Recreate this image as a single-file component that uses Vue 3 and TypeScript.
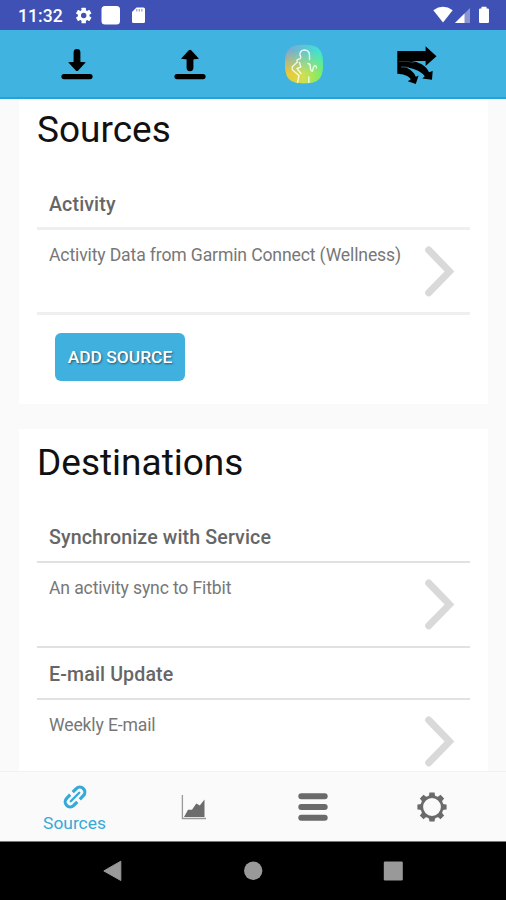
<script setup lang="ts">
interface Row {
  heading: string
  detail: string
}

const sources: Row[] = [
  { heading: 'Activity', detail: 'Activity Data from Garmin Connect (Wellness)' },
]
const destinations: Row[] = [
  { heading: 'Synchronize with Service', detail: 'An activity sync to Fitbit' },
  { heading: 'E-mail Update', detail: 'Weekly E-mail' },
]
const teeth: number[] = [0, 45, 90, 135, 180, 225, 270, 315]
</script>

<template>
  <div class="screen">
    <header class="status">
      <span class="clock">11:32</span>
      <svg class="status-left" width="75" height="30" viewBox="0 0 75 30">
        <g transform="translate(8.7 15.5)" fill="#fff">
          <rect v-for="a in [0, 60, 120]" :key="a" x="-2.2" y="-7.8" width="4.4" height="15.6" rx=".6" :transform="`rotate(${a})`" />
          <circle r="5.8" />
          <circle r="2.7" fill="#3f51b5" />
        </g>
        <rect x="26.5" y="6" width="18.5" height="18.5" rx="3.5" fill="#fff" />
        <path d="M61.5 7.5H68.5Q70 7.5 70 9V21.5Q70 23 68.5 23H58.5Q57 23 57 21.5V12Z" fill="#fff" />
        <path d="M61.8 9v2.6M64.3 9v2.6M66.8 9v2.6" stroke="#9aa4d8" stroke-width="1.3" />
      </svg>
      <svg class="status-right" width="60" height="30" viewBox="0 0 60 30">
        <path d="M.3 10.3Q10 3.4 19.7 10.3L10 22.5Z" fill="#fff" />
        <path d="M37 8V23H22Z" fill="#8994d1" />
        <path d="M31.5 13.4V23H22Z" fill="#fff" />
        <path d="M48.5 7.5V6.8H53.5V8.5H54.8Q56 8.5 56 9.7V21.8Q56 23 54.8 23H47.2Q46 23 46 21.8V9.7Q46 8.5 47.2 8.5H48.5Z" fill="#fff" />
      </svg>
    </header>

    <nav class="toolbar">
      <svg width="40" height="40" viewBox="0 0 40 40">
        <path d="M20 8.4V18" stroke="#000" stroke-width="6.8" stroke-linecap="round" />
        <path d="M11.2 18.3Q20 17.4 28.8 18.3L21.2 26.6Q20 27.6 18.8 26.6Z" />
        <path d="M7 32.6H33" stroke="#000" stroke-width="5.2" stroke-linecap="round" />
      </svg>
      <svg width="40" height="40" viewBox="0 0 40 40">
        <path d="M20 14V23.8" stroke="#000" stroke-width="6.8" stroke-linecap="round" />
        <path d="M11 14.8L18.8 6.3Q20 5.2 21.2 6.3L29 14.8Q20 16 11 14.8Z" />
        <path d="M7 32.6H33" stroke="#000" stroke-width="5.2" stroke-linecap="round" />
      </svg>
      <svg width="40" height="40" viewBox="0 0 40 40">
        <defs>
          <linearGradient id="tile" x1="0" y1="0" x2="1" y2=".15">
            <stop offset="0" stop-color="#83a3d2" />
            <stop offset=".5" stop-color="#60c5d2" />
            <stop offset="1" stop-color="#3be8d5" />
          </linearGradient>
          <linearGradient id="warm" x1="0" y1="0" x2="1" y2="0">
            <stop offset="0" stop-color="#f2c52c" />
            <stop offset=".5" stop-color="#cde052" />
            <stop offset="1" stop-color="#75ed66" />
          </linearGradient>
          <linearGradient id="fade" x1="0" y1="0" x2="0" y2="1">
            <stop offset=".15" stop-color="#000" />
            <stop offset=".75" stop-color="#fff" />
          </linearGradient>
          <mask id="lower"><rect width="40" height="40" fill="url(#fade)" /></mask>
        </defs>
        <path d="M20 .8C34 .8 39 5 39 20S34 39.3 20 39.3S1 35 1 20S6 .8 20 .8Z" fill="url(#tile)" />
        <path d="M20 .8C34 .8 39 5 39 20S34 39.3 20 39.3S1 35 1 20S6 .8 20 .8Z" fill="url(#warm)" mask="url(#lower)" />
        <g fill="none" stroke="#fff" stroke-opacity=".82" stroke-width="1.4" stroke-linecap="round" stroke-linejoin="round">
          <path d="M16 11.5Q15.5 6.2 20.5 6Q25.5 6.2 25.5 11.5V15.5" />
          <path d="M16.5 12Q17.5 15 14.5 15.2Q12 15.8 13.5 18L8.5 22.5Q7.5 24 8.5 26L15 31.5L13.5 38.5" />
          <path d="M15.5 18.5L16.8 23L13 24.5L17 29.5" />
          <path d="M24.8 33V38.5" />
          <path d="M24 19.5Q26.5 20 26.3 23Q26.5 27.5 28.5 27.2Q29.3 22 31 21.5Q32.7 22 32.5 24" />
        </g>
      </svg>
      <svg width="40" height="40" viewBox="0 0 40 40">
        <path d="M.3 7H28.6V2.3L39.5 12.2L28.6 22V16.9H.3Z" />
        <path d="M.3 16.5H12C23 18 29.5 22 32 28.3L35.7 26.9L35 35.8L25.3 34.6L27.8 32.2C23 26.5 16 24.2 8.3 23.6C13 24.8 17 28.5 18.8 32.8L21.6 31.6L18.8 40L10.8 37.3L13.8 35.2C11 31.5 6 30 .3 29.8Z" />
        <path d="M2 17.6Q11 16.7 17 18.8" fill="none" stroke="#18455a" stroke-width=".8" />
        <path d="M4 23Q8 22.8 12 23.6" fill="none" stroke="#2b7895" stroke-width=".8" />
      </svg>
    </nav>

    <main class="content">
      <section class="card">
        <h1>Sources</h1>
        <div v-for="row in sources" :key="row.heading" class="group thick">
          <h2>{{ row.heading }}</h2>
          <div class="item">
            <span class="detail">{{ row.detail }}</span>
            <svg class="chevron" width="34" height="54" viewBox="0 0 34 54"><path d="M6.7 5L27.5 26.5L6.7 47.8" /></svg>
          </div>
        </div>
        <button class="add">ADD SOURCE</button>
      </section>
      <section class="card second">
        <h1>Destinations</h1>
        <div v-for="row in destinations" :key="row.heading" class="group">
          <h2>{{ row.heading }}</h2>
          <div class="item">
            <span class="detail">{{ row.detail }}</span>
            <svg class="chevron" width="34" height="54" viewBox="0 0 34 54"><path d="M6.7 5L27.5 26.5L6.7 47.8" /></svg>
          </div>
        </div>
      </section>
    </main>

    <nav class="tabs">
      <div class="tab active">
        <svg width="24" height="24" viewBox="0 0 24 24">
          <g transform="rotate(-45 12 12)" fill="none" stroke="#35a9d8" stroke-width="3.2">
            <path d="M10.2 7H5.2A5 5 0 0 0 5.2 17H10.2M13.8 7H18.8A5 5 0 0 1 18.8 17H13.8" />
            <path d="M6 12H18" stroke-linecap="round" stroke-width="2.4" />
          </g>
        </svg>
        <span>Sources</span>
      </div>
      <div class="tab">
        <svg width="26" height="26" viewBox="0 0 26 26">
          <path d="M1.4 1V24.5H25" fill="none" stroke="#999" stroke-width="1.3" />
          <path d="M3 23L7 15.8H11L15.3 9.5L18.8 11.5L23.5 5.5V23Z" fill="#6c6c6c" />
        </svg>
      </div>
      <div class="tab">
        <svg width="30" height="30" viewBox="0 0 30 30">
          <path d="M3.3 4.3H26.7M3.3 15H26.7M3.3 25.7H26.7" stroke="#6a6a6a" stroke-width="6" stroke-linecap="round" />
        </svg>
      </div>
      <div class="tab">
        <svg width="30" height="30" viewBox="-15 -15 30 30">
          <circle r="10.2" fill="none" stroke="#6a6a6a" stroke-width="2.6" />
          <path v-for="a in teeth" :key="a" d="M-3.8 -10.4Q-2.6 -11.2 -2.6 -14.6H2.6Q2.6 -11.2 3.8 -10.4Z" fill="#6a6a6a" :transform="`rotate(${a})`" />
        </svg>
      </div>
    </nav>

    <footer class="system">
      <svg width="20" height="22" viewBox="0 0 20 22"><path d="M17.8 1.2V20.5L.8 10.9Z" fill="#999" stroke="#999" stroke-linejoin="round" /></svg>
      <svg width="20" height="22" viewBox="0 0 20 22"><circle cx="10.2" cy="10.7" r="9.2" fill="#999" /></svg>
      <svg width="20" height="22" viewBox="0 0 20 22"><rect x=".8" y="1.5" width="19" height="19" rx="1.2" fill="#999" /></svg>
    </footer>
  </div>
</template>

<style>
body {
  background: #fafafa;
}
</style>

<style scoped>
.screen {
  display: flex;
  flex-direction: column;
  width: 506px;
  height: 900px;
  overflow: hidden;
  background: #fafafa;
  font-family: Roboto, "Liberation Sans", sans-serif;
}
svg {
  display: block;
  flex: none;
}
.status {
  display: flex;
  flex: none;
  align-items: center;
  height: 30px;
  padding: 0 13px 0 18px;
  background: #3f51b5;
  color: #fff;
}
.clock {
  box-sizing: border-box;
  width: 57px;
  padding-top: 2px;
  font-size: 17.6px;
  font-weight: 500;
  line-height: 30px;
}
.status-right {
  margin-left: auto;
}
.toolbar {
  display: grid;
  flex: none;
  grid-template-columns: repeat(4, 113.5px);
  justify-items: center;
  box-sizing: border-box;
  height: 69px;
  padding: 14px 0 0 20px;
  background: #40b3e0;
  border-bottom: 2px solid #22a4d8;
}
.content {
  flex: none;
  height: 672px;
  overflow: hidden;
}
.card {
  box-sizing: border-box;
  width: 469px;
  height: 305px;
  margin-left: 19px;
  padding: 0 18px;
  background: #fff;
}
.second {
  height: 400px;
  margin-top: 25px;
  padding-top: 3px;
}
h1 {
  height: 79px;
  margin: 0;
  color: #111;
  font-size: 37px;
  font-weight: 400;
  line-height: 61px;
}
h2 {
  box-sizing: border-box;
  height: 52px;
  margin: 0;
  padding-left: 12px;
  color: #666;
  font-size: 19.6px;
  font-weight: 500;
  letter-spacing: 0.13px;
  line-height: 53px;
  border-bottom: 2px solid #e1e1e1;
}
.item {
  display: flex;
  box-sizing: border-box;
  justify-content: space-between;
  height: 85px;
  padding: 15px 14px 0 12px;
  border-bottom: 2px solid #e1e1e1;
}
.thick h2,
.thick .item {
  border-bottom: 3px solid #efefef;
}
.detail {
  color: #777;
  font-size: 17.6px;
  letter-spacing: -0.14px;
  line-height: 20px;
  white-space: nowrap;
}
.chevron path {
  fill: none;
  stroke: #d9d9d9;
  stroke-width: 7;
  stroke-linecap: round;
}
.add {
  display: block;
  width: 130px;
  height: 48px;
  margin: 18px 0 0 18px;
  padding: 0;
  border: 0;
  border-radius: 6px;
  background: #40b0df;
  color: #fff;
  font: 500 17.4px/48px Roboto, "Liberation Sans", sans-serif;
  text-shadow: 1px 1px 2px rgba(0, 0, 0, 0.5);
}
.tabs {
  display: grid;
  flex: none;
  grid-template-columns: repeat(4, 119px);
  box-sizing: border-box;
  height: 70px;
  padding-left: 15px;
  border-top: 1px solid #f2f2f2;
  background: #fafafa;
}
.tab {
  display: flex;
  flex-direction: column;
  align-items: center;
  justify-content: center;
  padding-top: 1px;
}
.active {
  justify-content: flex-start;
  padding-top: 13px;
  color: #35a9d8;
  font-size: 17.4px;
  line-height: 20px;
}
.active span {
  margin-top: 4px;
}
.system {
  display: flex;
  flex: none;
  align-items: center;
  justify-content: space-between;
  box-sizing: border-box;
  height: 59px;
  padding: 0 103px;
  border-top: 1px solid #777;
  background: #000;
}
</style>
